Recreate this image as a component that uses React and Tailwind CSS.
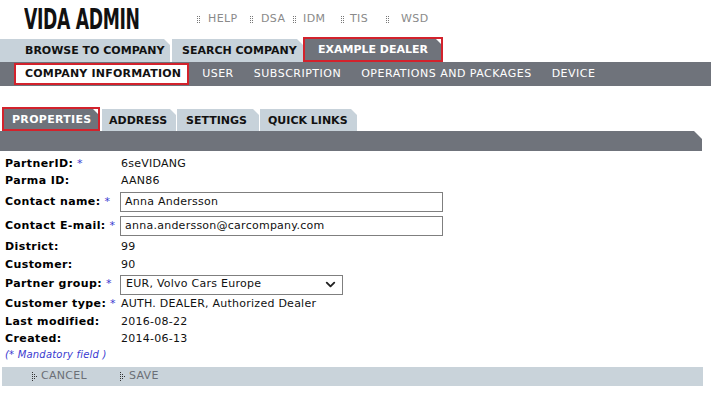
import { ChevronDown } from "lucide-react";

const topLinks = [
  { label: "HELP", w: "w-[53px]", gap: "gap-[8px]" },
  { label: "DSA", w: "w-[43px]", gap: "gap-[8px]" },
  { label: "IDM", w: "w-[48px]", gap: "gap-[7px]" },
  { label: "TIS", w: "w-[45px]", gap: "gap-[6px]" },
  { label: "WSD", w: "w-[50px]", gap: "gap-[12px]" },
];

const cut = "[clip-path:polygon(0_0,calc(100%-6px)_0,100%_6px,100%_100%,0_100%)]";

function Dots() {
  return <span className="inline-block w-[3px] h-[7px] border-x border-dotted border-[#777]" />;
}

function Arrow() {
  const pts = [
    [0, 0], [0, 2], [0, 4], [0, 6], [0, 8],
    [2, 2], [2, 4], [2, 6],
    [4, 4],
  ];
  return (
    <svg width="5" height="9" viewBox="0 0 5 9" className="shrink-0">
      {pts.map(([x, y]) => (
        <rect key={`${x}-${y}`} x={x} y={y} width="1" height="1" fill="#333" />
      ))}
    </svg>
  );
}

function Fold() {
  return <span className="absolute top-0 right-0 w-[5px] h-[5px] bg-white [clip-path:polygon(0_0,100%_0,100%_100%)]" />;
}

function Label({ children, req }) {
  return (
    <div className="w-[115px] shrink-0 font-bold text-black tracking-[0.4px] whitespace-nowrap">
      {children}
      {req && <span className="text-[#3a3ad0] font-normal"> *</span>}
    </div>
  );
}

function Row({ label, req, value, h = "h-[18px]" }) {
  return (
    <div className={`flex items-center ${h}`}>
      <Label req={req}>{label}</Label>
      <div className="pl-[1px] text-[#111] tracking-[0.25px]">{value}</div>
    </div>
  );
}

export default function App() {
  return (
    <div className="w-[711px] h-[395px] bg-white font-['DejaVu_Sans',sans-serif] text-[11px] overflow-hidden">
      {/* Header */}
      <div className="flex h-[37px] pl-[24px]">
        <div className="w-[173px] pt-[5px] whitespace-nowrap">
          <span className="inline-block origin-left scale-x-[0.66] font-['DejaVu_Sans_Condensed','Liberation_Sans_Narrow',sans-serif] font-bold text-[29px] leading-none text-[#111] tracking-[-0.5px] whitespace-nowrap">
            VIDA ADMIN
          </span>
        </div>
        <nav className="flex items-center pt-[9px] h-[30px] text-[#8a8a8a] tracking-[0.4px]">
          {topLinks.map((l) => (
            <div key={l.label} className={`flex items-center ${l.w} ${l.gap}`}>
              <Dots />
              <span>{l.label}</span>
            </div>
          ))}
        </nav>
      </div>

      {/* Main tabs */}
      <div className="flex items-end h-[25px] font-bold text-[#111]">
        <div className={`w-[170px] h-[23px] bg-[#c7d2da] pl-[25px] pt-[2px] flex items-center ${cut}`}>BROWSE TO COMPANY</div>
        <div className={`ml-[2px] w-[131px] h-[23px] bg-[#c7d2da] pl-[10px] pt-[2px] flex items-center ${cut}`}>SEARCH COMPANY</div>
        <div className="relative w-[140px] h-[25px] bg-[#6f737b] border-2 border-[#d3222c] pl-[13px] pt-[2px] flex items-center text-white">
          EXAMPLE DEALER
          <Fold />
        </div>
      </div>

      {/* Sub navigation */}
      <div className="flex items-center h-[24px] bg-[#6f737b] pl-[14px] text-white">
        <div className="h-[22px] bg-white border-2 border-[#d3222c] pl-[9px] pr-[6px] pt-[1px] flex items-center font-bold text-[#111] tracking-[0.2px]">
          COMPANY INFORMATION
        </div>
        <div className="flex items-center ml-[13px] gap-[20px] pt-[1px] tracking-[0.5px]">
          <span>USER</span>
          <span>SUBSCRIPTION</span>
          <span>OPERATIONS AND PACKAGES</span>
          <span>DEVICE</span>
        </div>
      </div>

      {/* Section tabs */}
      <div className="mt-[21px] flex items-end h-[24px] pl-[2px] font-bold text-[#111]">
        <div className="relative w-[98px] h-[24px] bg-[#6f737b] border-2 border-[#d3222c] pl-[8px] pt-[2px] flex items-center text-white tracking-[0.3px]">
          PROPERTIES
          <Fold />
        </div>
        <div className={`ml-[2px] w-[74px] h-[22px] bg-[#c7d2da] pl-[7px] pt-[2px] flex items-center ${cut}`}>ADDRESS</div>
        <div className={`ml-[1px] w-[82px] h-[22px] bg-[#c7d2da] pl-[9px] pt-[2px] flex items-center ${cut}`}>SETTINGS</div>
        <div className={`ml-[1px] w-[97px] h-[22px] bg-[#c7d2da] pl-[8px] pt-[2px] flex items-center ${cut}`}>QUICK LINKS</div>
      </div>
      <div className="w-[702px] h-[20px] bg-[#6f737b] [clip-path:polygon(0_0,calc(100%-8px)_0,100%_8px,100%_100%,0_100%)]" />

      {/* Form */}
      <div className="mt-[4px] pl-[5px]">
        <Row label="PartnerID:" req value="6seVIDANG" />
        <Row label="Parma ID:" value="AAN86" h="h-[17px]" />
        <div className="flex items-center h-[24px]">
          <Label req>Contact name:</Label>
          <div className="w-[323px] h-[20px] border border-[#7f7f7f] pl-[4px] flex items-center text-[#111] tracking-[0.25px]">Anna Andersson</div>
        </div>
        <div className="flex items-center h-[24px]">
          <Label req>Contact E-mail:</Label>
          <div className="w-[323px] h-[20px] border border-[#7f7f7f] pl-[4px] flex items-center text-[#111] tracking-[0.25px]">anna.andersson@carcompany.com</div>
        </div>
        <Row label="District:" value="99" h="h-[18px]" />
        <Row label="Customer:" value="90" />
        <div className="flex items-center h-[21px]">
          <Label req>Partner group:</Label>
          <div className="w-[223px] h-[20px] border border-[#7f7f7f] pl-[5px] pr-[4px] flex items-center justify-between text-[#111] tracking-[0.25px]">
            <span>EUR, Volvo Cars Europe</span>
            <ChevronDown size={15} strokeWidth={3} className="text-[#222]" />
          </div>
        </div>
        <Row label="Customer type:" req value="AUTH. DEALER, Authorized Dealer" />
        <Row label="Last modified:" value="2016-08-22" />
        <Row label="Created:" value="2014-06-13" h="h-[16px]" />
        <div className="h-[14px] flex items-center italic text-[10px] text-[#3a3ad0] tracking-[0.2px]">(* Mandatory field )</div>
      </div>

      {/* Actions */}
      <div className="mt-[6px] mx-[2px] w-[701px] h-[19px] bg-[#c9d3da] flex items-center text-[#6b6f76] tracking-[0.3px]">
        <div className="ml-[30px] flex items-center gap-[4px]">
          <Arrow />
          <span>CANCEL</span>
        </div>
        <div className="ml-[33px] flex items-center gap-[4px]">
          <Arrow />
          <span>SAVE</span>
        </div>
      </div>
    </div>
  );
}
